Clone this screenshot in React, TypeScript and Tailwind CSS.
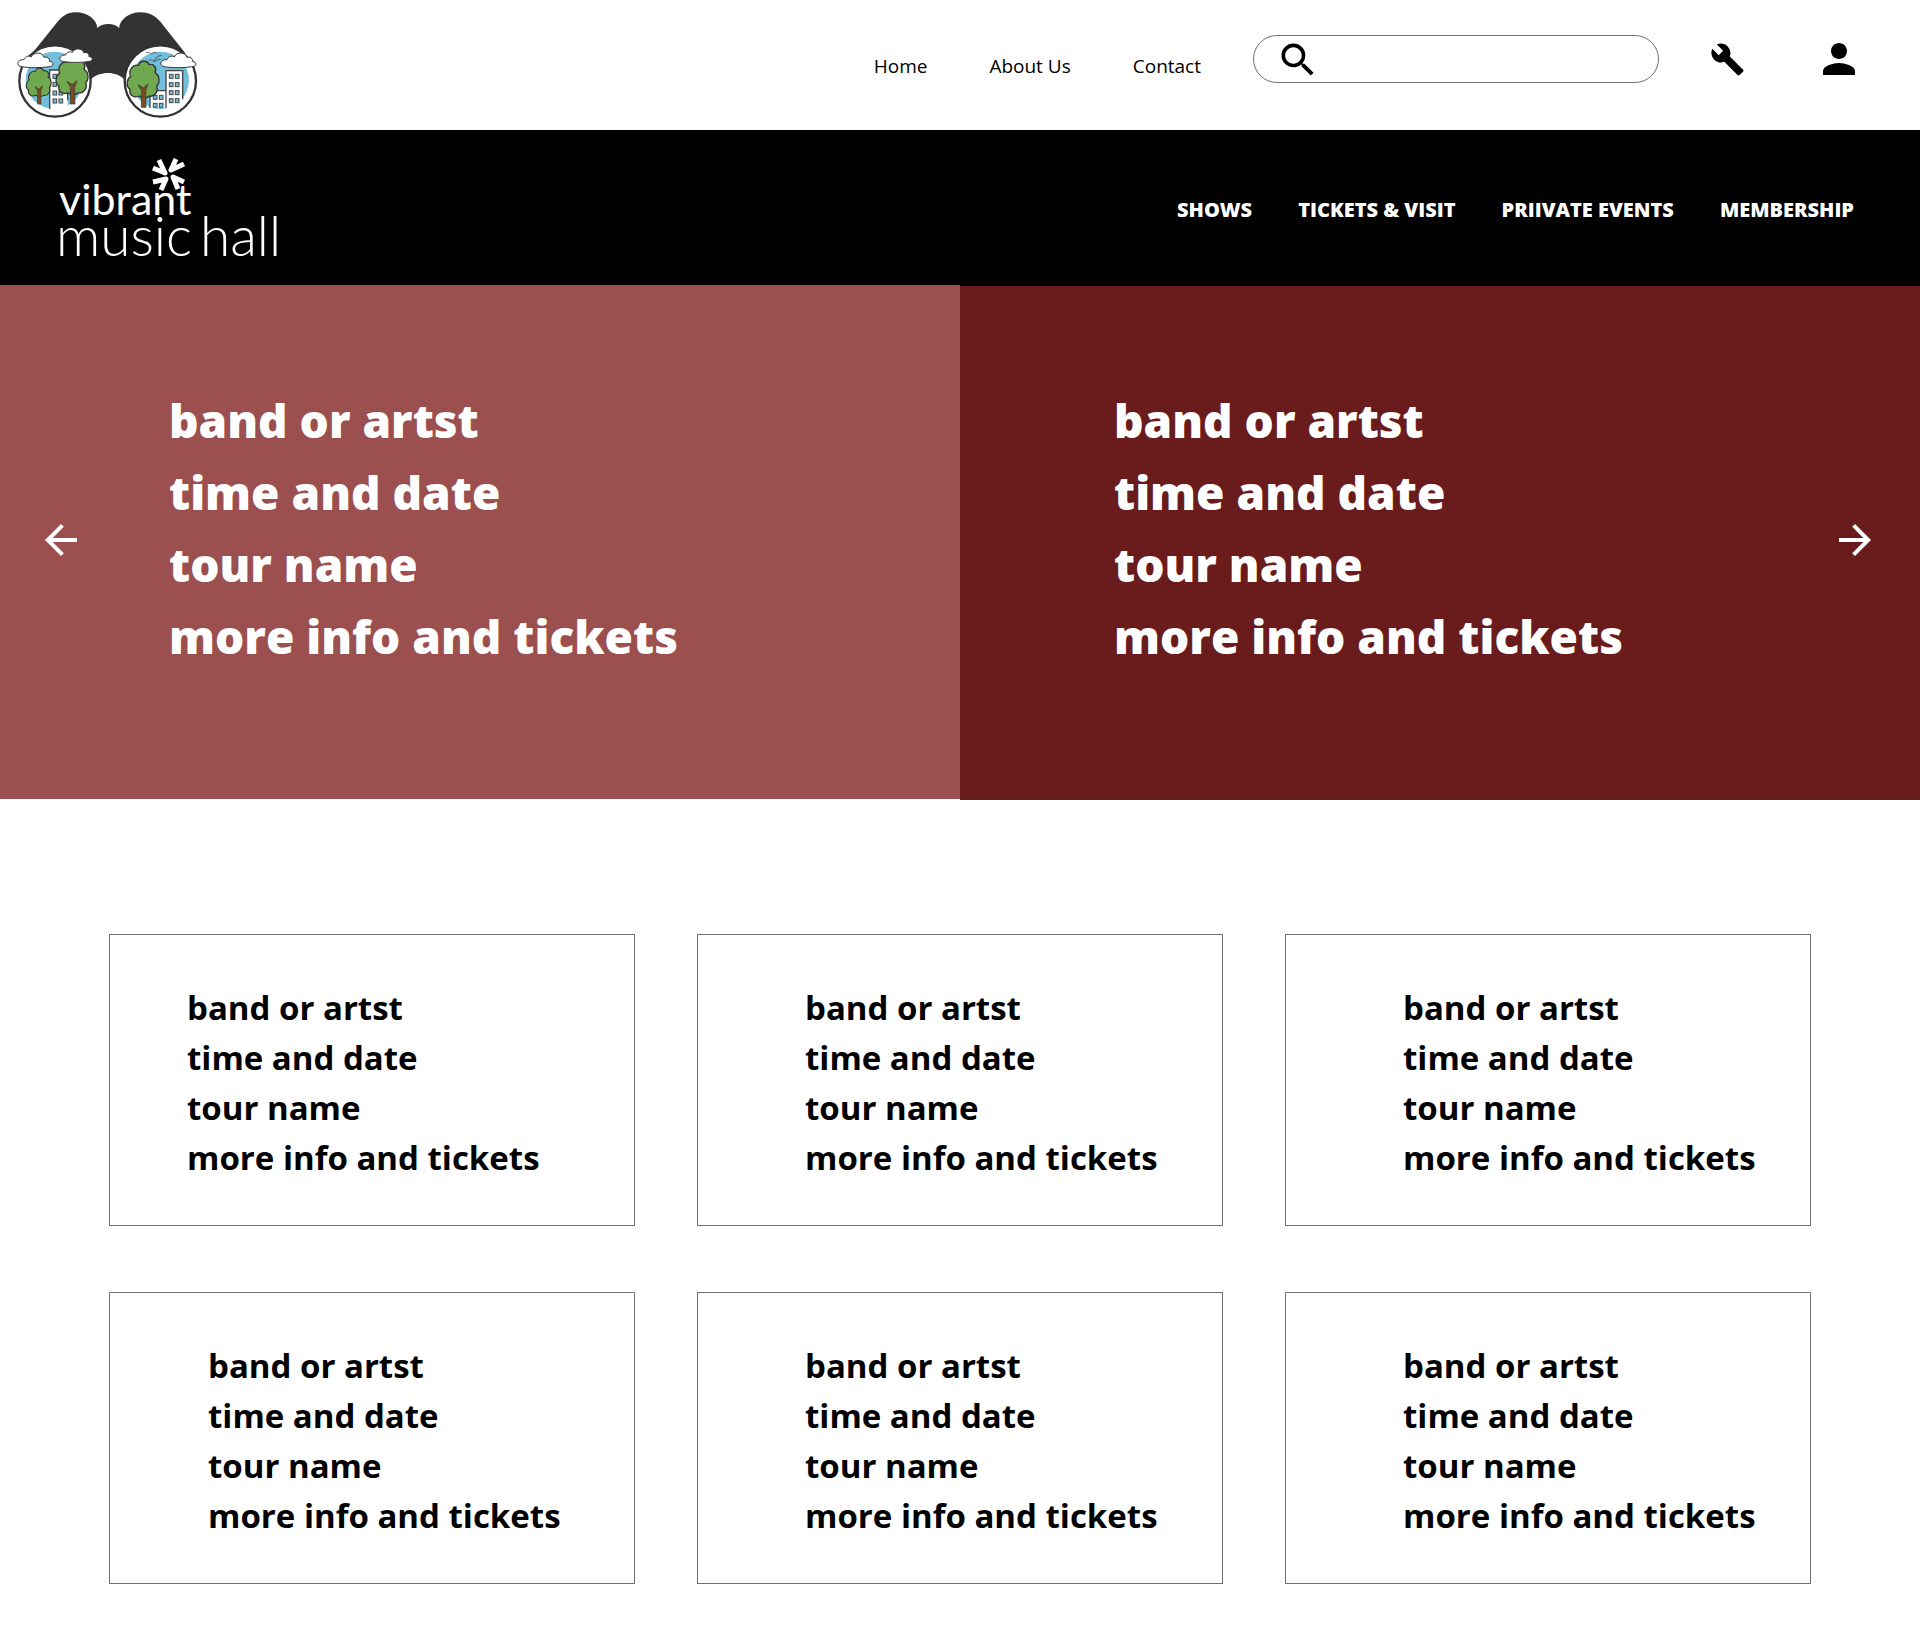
import React from "react";
import { MdArrowBack, MdArrowForward, MdBuild, MdPerson, MdSearch } from "react-icons/md";

const lines = ["band or artst", "time and date", "tour name", "more info and tickets"];

const cards = [
  { id: 1, indent: "pl-[77px]" },
  { id: 2, indent: "pl-[107px]" },
  { id: 3, indent: "pl-[117px]" },
  { id: 4, indent: "pl-[98px]" },
  { id: 5, indent: "pl-[107px]" },
  { id: 6, indent: "pl-[117px]" },
];

function Tree() {
  return (
    <g stroke="#333" strokeWidth="4" strokeLinejoin="round">
      <path
        fill="#6fa84f"
        d="M-14-50C-12-66 14-66 17-52C32-56 42-42 35-28C50-20 50 4 40 12C46 28 34 46 18 42C10 50-6 50-12 42C-28 50-44 38-40 22C-54 12-50-10-38-16C-46-34-32-54-14-50Z"
      />
      <path fill="#7a4a22" strokeWidth="2" d="M-6 76L-5 26L-16 8L0 18L14 6L7 26L8 76Z" />
    </g>
  );
}

function Cloud() {
  return (
    <path
      fill="#fff"
      stroke="#333"
      strokeWidth="3"
      d="M-42 20C-58 18-56-2-34-1C-30-12-18-14-12-9C-6-26 22-24 26-8C40-12 44 0 42 4C58 6 56 20 40 20C20 24-20 24-42 20Z"
    />
  );
}

function Building({ x, y, w, h, rows }: { x: number; y: number; w: number; h: number; rows: number[] }) {
  return (
    <g>
      <rect x={x} y={y} width={w} height={h} fill="#fff" />
      <path d={`M${x} ${y + h}V${y}H${x + w}V${y + h - 26}`} fill="none" stroke="#444" strokeWidth="4" />
      {rows.map((row) => (
        <g key={row} fill="#73bedb" stroke="#444" strokeWidth="3">
          <rect x={x + 10} y={row} width="11" height="12" />
          <rect x={x + 28} y={row} width="11" height="12" />
        </g>
      ))}
    </g>
  );
}

function BinocularsLogo() {
  return (
    <svg viewBox="0 0 660 390" className="h-[130px] w-[220px]" role="img" aria-label="City finder">
      <path
        fill="#333"
        d="M92 166L172 66C190 44 208 37 228 37C262 37 290 58 292 84C306 68 344 68 357 84C360 58 388 37 420 37C446 37 464 46 480 64L556 160L470 250L372 238C350 213 298 213 273 238L165 250Z"
      />
      <circle cx="165" cy="243" r="107" fill="#fff" stroke="#333" strokeWidth="7" />
      <circle cx="481" cy="243" r="107" fill="#fff" stroke="#333" strokeWidth="7" />
      <circle cx="163" cy="241" r="86" fill="#73bedb" />
      <circle cx="481" cy="241" r="86" fill="#73bedb" />

      <Building x={149} y={210} w={54} h={117} rows={[223, 247, 273, 297]} />
      <g transform="translate(117 253) scale(.78)">
        <Tree />
      </g>
      <g transform="translate(217 236)">
        <Tree />
      </g>
      <g transform="translate(106 180)">
        <Cloud />
      </g>
      <g transform="translate(228 166) scale(.92)">
        <Cloud />
      </g>

      <Building x={450} y={272} w={50} h={52} rows={[286, 310]} />
      <Building x={498} y={212} w={50} h={112} rows={[223, 248, 272, 296]} />
      <g transform="translate(430 246)">
        <Tree />
      </g>
      <g transform="translate(535 180)">
        <Cloud />
      </g>
      <path
        d="M438 158Q448 154 454 162Q460 154 470 158M446 181Q456 176 463 185Q466 168 485 166M463 185Q470 178 482 178"
        fill="none"
        stroke="#333"
        strokeWidth="2"
      />
    </svg>
  );
}

function HallLogo() {
  return (
    <svg viewBox="-5 0 235 125" className="h-[125px] w-[235px]" role="img" aria-label="vibrant music hall">
      <path
        d="M99 15L105 28L93 23M116 14L111 25L124 19M124 37L113 32L118 44M93 37L106 34L101 45"
        fill="none"
        stroke="#fff"
        strokeWidth="5"
        strokeLinejoin="round"
      />
      <g fill="#fff" fontFamily="Lato, sans-serif">
        <text x="-1" y="70" fontSize="43">vibrant</text>
        <text x="-4" y="111" fontSize="55" fontWeight="300">music</text>
        <text x="140" y="111" fontSize="55" fontWeight="300">hall</text>
      </g>
    </svg>
  );
}

function Header() {
  return (
    <header className="flex min-h-[130px] items-center bg-white pr-[57px]">
      <a href="#home">
        <BinocularsLogo />
      </a>
      <nav className="ml-auto flex gap-[62px] pt-0.5 pr-[52px] text-[19px] text-black">
        <a href="#home">Home</a>
        <a href="#about">About Us</a>
        <a href="#contact">Contact</a>
      </nav>
      <form className="mb-3 flex h-12 w-[406px] items-center rounded-full border border-[#707070] pr-6 pl-[22px]">
        <label htmlFor="search" className="pt-0.5">
          <MdSearch size={44} title="Search" />
        </label>
        <input id="search" type="text" className="h-full min-w-0 flex-1 px-2 text-lg outline-none" />
      </form>
      <button type="button" aria-label="Settings" className="mb-3 ml-[51px]">
        <MdBuild size={35} />
      </button>
      <button type="button" aria-label="Account" className="mb-3 ml-[70px]">
        <MdPerson size={48} />
      </button>
    </header>
  );
}

function HallBar() {
  return (
    <div className="flex min-h-[155px] items-center bg-black pr-[66px] pl-[55px] text-white">
      <a href="#hall">
        <HallLogo />
      </a>
      <nav className="ml-auto flex gap-[46px] pt-1 text-xl font-extrabold">
        <a href="#shows">SHOWS</a>
        <a href="#tickets">TICKETS &amp; VISIT</a>
        <a href="#private">PRIIVATE EVENTS</a>
        <a href="#membership">MEMBERSHIP</a>
      </nav>
    </div>
  );
}

function Hero() {
  return (
    <section className="grid grid-cols-2 items-start text-white">
      <div className="flex min-h-[514px] items-center bg-[#9b4f4f] pl-[37px]">
        <button type="button" aria-label="Previous" className="mb-1">
          <MdArrowBack size={48} />
        </button>
        <div className="mb-7 ml-[84px] text-[46px] leading-[72px] font-extrabold">
          {lines.map((line) => (
            <p key={line}>{line}</p>
          ))}
        </div>
      </div>
      <div className="flex min-h-[515px] items-center border-t border-black bg-[#6a1c1c] pr-[41px] pl-[154px]">
        <div className="mb-[30px] text-[46px] leading-[72px] font-extrabold">
          {lines.map((line) => (
            <p key={line}>{line}</p>
          ))}
        </div>
        <button type="button" aria-label="Next" className="mb-1.5 ml-auto">
          <MdArrowForward size={48} />
        </button>
      </div>
    </section>
  );
}

function App() {
  return (
    <div className="bg-white font-['Open_Sans',sans-serif] text-black">
      <Header />
      <HallBar />
      <Hero />
      <main className="grid grid-cols-3 gap-x-[62px] gap-y-[66px] px-[109px] pt-[134px] pb-16">
        {cards.map((card) => (
          <article
            key={card.id}
            className={`border border-[#707070] pt-12 pb-[42px] text-[33px] leading-[50px] font-bold ${card.indent}`}
          >
            {lines.map((line) => (
              <p key={line}>{line}</p>
            ))}
          </article>
        ))}
      </main>
    </div>
  );
}

export default App;
